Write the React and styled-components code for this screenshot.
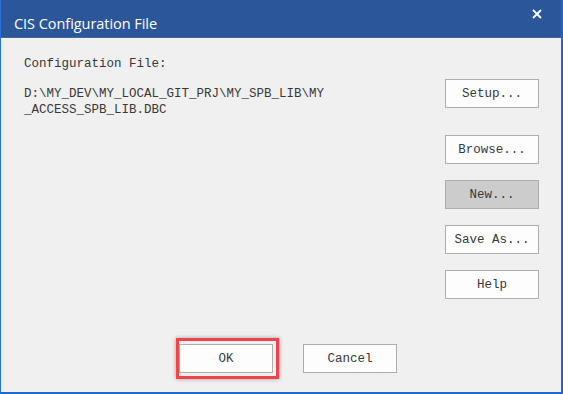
import React from "react";
import styled, { createGlobalStyle } from "styled-components";

const GlobalStyle = createGlobalStyle`
  html, body {
    margin: 0;
    padding: 0;
    background: #ffffff;
  }
`;

const Window = styled.div`
  width: 563px;
  height: 394px;
  box-sizing: border-box;
  display: flex;
  flex-direction: column;
  border-left: 1px solid #2a6fd6;
  border-right: 2px solid #1f66cf;
  border-bottom: 2px solid #1f66cf;
  background: #f0f0f0;
  overflow: hidden;
`;

const TitleBar = styled.header`
  height: 38px;
  flex-shrink: 0;
  background-color: #2b579a;
  display: flex;
  align-items: center;
  justify-content: space-between;
  padding: 10px 17px 0 13px;
  box-sizing: border-box;
  border-bottom: 1px solid #3f6aa8;
`;

const Title = styled.span`
  color: #ffffff;
  font-family: "Open Sans", "Noto Sans", sans-serif;
  font-size: 14.5px;
  letter-spacing: -0.05px;
`;

const CloseButton = styled.button`
  align-self: flex-start;
  background: transparent;
  border: none;
  padding: 0;
  width: 14px;
  height: 14px;
  margin-top: -3px;
  display: flex;
  align-items: center;
  justify-content: center;
  cursor: pointer;
`;

const Content = styled.div`
  flex: 1;
  display: flex;
  flex-direction: column;
  font-family: "Liberation Mono", "DejaVu Sans Mono", monospace;
  font-size: 12.5px;
  color: #383838;
`;

const Main = styled.div`
  display: flex;
  justify-content: space-between;
  padding: 18px 22px 0 23px;
`;

const InfoColumn = styled.div`
  display: flex;
  flex-direction: column;
  gap: 14px;
`;

const Label = styled.div`
  line-height: 16px;
`;

const PathText = styled.div`
  line-height: 16px;
  width: 310px;
  word-break: break-all;
`;

const ButtonColumn = styled.div`
  display: flex;
  flex-direction: column;
  gap: 16px;
  padding-top: 23px;
`;

const DialogButton = styled.button`
  position: relative;
  width: 94px;
  height: 29px;
  box-sizing: border-box;
  margin-bottom: ${(p) => p.$extraGap || 0}px;
  border: 1px solid #adadad;
  background-color: ${(p) => (p.$pressed ? "#cccccc" : "#fdfdfd")};
  font-family: "Liberation Mono", "DejaVu Sans Mono", monospace;
  font-size: 12.5px;
  color: #383838;
  padding: 0;
  cursor: pointer;

  ${(p) =>
    p.$highlight &&
    `
    &::after {
      content: "";
      position: absolute;
      top: -7px;
      left: -4px;
      right: -7px;
      bottom: -7px;
      border: 3px solid #f2434a;
      box-shadow: 0 0 4px rgba(0, 0, 0, 0.35);
      pointer-events: none;
    }
  `}
`;

const Footer = styled.div`
  margin-top: auto;
  display: flex;
  justify-content: center;
  gap: 30px;
  padding: 0 0 19px 14px;
`;

const App = () => {
  return (
    <>
      <GlobalStyle />
      <Window>
        <TitleBar>
          <Title>CIS Configuration File</Title>
          <CloseButton aria-label="Close">
            <svg width="10" height="10" viewBox="0 0 10 10">
              <path d="M1 1 L9 9 M9 1 L1 9" stroke="#ffffff" strokeWidth="1.8" />
            </svg>
          </CloseButton>
        </TitleBar>
        <Content>
          <Main>
            <InfoColumn>
              <Label>Configuration File:</Label>
              <PathText>
                D:\MY_DEV\MY_LOCAL_GIT_PRJ\MY_SPB_LIB\MY
                <br />
                _ACCESS_SPB_LIB.DBC
              </PathText>
            </InfoColumn>
            <ButtonColumn>
              <DialogButton $extraGap={11}>Setup...</DialogButton>
              <DialogButton>Browse...</DialogButton>
              <DialogButton $pressed>New...</DialogButton>
              <DialogButton>Save As...</DialogButton>
              <DialogButton>Help</DialogButton>
            </ButtonColumn>
          </Main>
          <Footer>
            <DialogButton $highlight>OK</DialogButton>
            <DialogButton>Cancel</DialogButton>
          </Footer>
        </Content>
      </Window>
    </>
  );
};

export default App;
